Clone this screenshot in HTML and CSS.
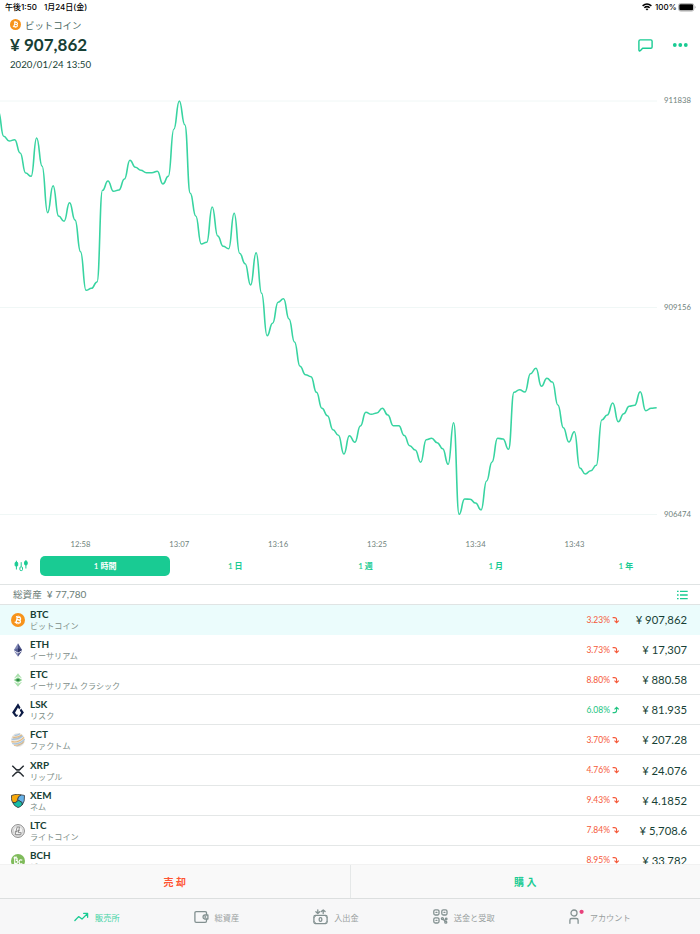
FILE: index.html
```html
<!DOCTYPE html>
<html lang="ja">
<head>
    <meta charset="UTF-8">
    <meta name="viewport" content="width=device-width, initial-scale=1.0">
    <title>販売所</title>
    <link rel="stylesheet" href="styles.css">
</head>
<body>
    <svg class="defs">
        <symbol id="down" viewBox="0 0 8 8">
            <path d="M.6 1.6h1.8q2.2 0 2.2 2v2.8M2.5 4.7l2.1 2.1 2.2-2.1" />
        </symbol>
        <symbol id="up" viewBox="0 0 8 8">
            <path d="M.6 6.6h1.8q2.2 0 2.2-2v-2.8M2.5 3.4l2.1-2.1 2.2 2.1" />
        </symbol>
        <symbol id="btc" viewBox="0 0 14 14">
            <circle cx="7" cy="7" r="7" fill="#f7931a" />
            <g transform="rotate(13 7 7)" fill="none" stroke="#fff" stroke-width="1.3">
                <path d="M4.2 4.1h3.5q1.6 0 1.6 1.35T7.7 6.8H5.6h2.4q1.8 0 1.8 1.5T8 9.8H4.2M5.7 4v5.8" />
                <path d="M6.2 2.7v1.4M7.9 2.7v1.4M6.2 9.8v1.5M7.9 9.8v1.5" stroke-width=".8" />
            </g>
        </symbol>
    </svg>

    <div class="status">
        <span class="clock">午後1:50</span>
        <span class="date">1月24日(金)</span>
        <svg class="wifi" width="10" height="8" viewBox="0 0 10 8" fill="none" stroke="#000" stroke-width="1.5">
            <path d="M.6 2.9q4.4-3.9 8.8 0M2.3 4.8q2.7-2.3 5.4 0" />
            <path d="M3.5 5.9L5 7.5l1.5-1.6Q5 4.9 3.5 5.9z" fill="#000" stroke="none" />
        </svg>
        <span class="charge">100%</span>
        <svg width="18" height="9" viewBox="0 0 18 9">
            <rect x=".5" y=".5" width="15.4" height="7.6" rx="2.2" fill="#fff" stroke="#aaa" stroke-width=".8" />
            <rect x="1.3" y="1.3" width="13.8" height="6" rx="1.2" />
            <path d="M16.8 3v2.6q.9-.4.9-1.3t-.9-1.3z" fill="#aaa" />
        </svg>
    </div>

    <header class="header">
        <div>
            <div class="coin-title"><svg width="11" height="11"><use href="#btc" /></svg><span>ビットコイン</span></div>
            <div class="big-price">¥ 907,862</div>
            <div class="time">2020/01/24 13:50</div>
        </div>
        <div class="actions">
            <svg width="15" height="13" viewBox="0 0 15 13" fill="none" stroke="#19cb93" stroke-width="1.4" stroke-linejoin="round">
                <path d="M2.2.9h10.6q1.3 0 1.3 1.3v5.7q0 1.3-1.3 1.3H4.6L2.3 11.7q-1.4.8-1.4-.9V2.2Q.9.9 2.2.9z" />
            </svg>
            <svg width="16" height="4" viewBox="0 0 16 4" fill="#19cb93">
                <circle cx="2.8" cy="2" r="1.9" /><circle cx="8.3" cy="2" r="1.9" /><circle cx="13.8" cy="2" r="1.9" />
            </svg>
        </div>
    </header>

    <svg class="chart" width="700" height="476" viewBox="0 76 700 476">
        <path class="grid-line" d="M0 101H657M0 307.5H657M0 514.5H657" />
        <path id="line" class="line" />
        <g class="axis">
            <text x="664" y="103.4" textLength="27">911838</text>
            <text x="664" y="310.1" textLength="27">909156</text>
            <text x="664" y="517" textLength="27">906474</text>
            <text x="70.5" y="546.7" textLength="20">12:58</text>
            <text x="169.3" y="546.7" textLength="20">13:07</text>
            <text x="268.1" y="546.7" textLength="20">13:16</text>
            <text x="366.9" y="546.7" textLength="20">13:25</text>
            <text x="465.6" y="546.7" textLength="20">13:34</text>
            <text x="564.4" y="546.7" textLength="20">13:43</text>
        </g>
    </svg>

    <div class="range">
        <svg width="16" height="12" viewBox="0 0 16 12" fill="#19cb93" stroke="#19cb93">
            <path d="M3.4.7v8.8M8.2 2.2v4.5M12.9.2v8.3" stroke-width="1" />
            <rect x="2.1" y="2.3" width="2.6" height="3.8" rx=".8" />
            <rect x="11.6" y="1.3" width="2.6" height="3.6" rx=".8" />
            <rect x="6.9" y="6.8" width="2.6" height="3.8" rx="1.1" fill="#fff" />
        </svg>
        <div class="range-tabs">
            <span class="active">1 時間</span>
            <span>1 日</span>
            <span>1 週</span>
            <span>1 月</span>
            <span>1 年</span>
        </div>
    </div>

    <div class="assets">
        <span>総資産</span><span class="total">¥ 77,780</span>
        <svg width="11" height="10" viewBox="0 0 11 10" fill="none" stroke="#19cb93" stroke-width="1.3">
            <path d="M0 1.3h1.6M3 1.3h7.7M0 5h1.6M3 5h7.7M0 8.7h1.6M3 8.7h7.7" />
        </svg>
    </div>

    <div class="coins">
        <div class="coin selected">
            <svg class="logo"><use href="#btc" /></svg>
            <div class="row">
                <div class="name"><b>BTC</b><small>ビットコイン</small></div>
                <span class="change">3.23%<svg><use href="#down" /></svg></span>
                <span class="price">¥ 907,862</span>
            </div>
        </div>
        <div class="coin">
            <svg class="logo" viewBox="0 0 14 14">
                <path d="M7 .3L2.9 7.1 7 9.5z" fill="#7f86b4" /><path d="M7 .3l4.1 6.8L7 9.5z" fill="#4b5287" />
                <path d="M2.9 7.1L7 5.3v4.2z" fill="#5a6295" /><path d="M11.1 7.1L7 5.3v4.2z" fill="#2f3566" />
                <path d="M2.9 8L7 10.4v3.4z" fill="#8389b5" /><path d="M11.1 8L7 10.4v3.4z" fill="#4b5287" />
            </svg>
            <div class="row">
                <div class="name"><b>ETH</b><small>イーサリアム</small></div>
                <span class="change">3.73%<svg><use href="#down" /></svg></span>
                <span class="price">¥ 17,307</span>
            </div>
        </div>
        <div class="coin">
            <svg class="logo" viewBox="0 0 14 14">
                <path d="M7 .3L2.9 5.4 7 3.6l4.1 1.8z" fill="#a9dfab" /><path d="M7 13.8L2.9 8.7 7 10.5l4.1-1.8z" fill="#a9dfab" />
                <path d="M2.7 7L7 4.3 11.3 7 7 9.7z" fill="#8bd38e" /><path d="M4.5 7L7 5.6 9.5 7 7 8.5z" fill="#2e8b46" />
            </svg>
            <div class="row">
                <div class="name"><b>ETC</b><small>イーサリアム クラシック</small></div>
                <span class="change">8.80%<svg><use href="#down" /></svg></span>
                <span class="price">¥ 880.58</span>
            </div>
        </div>
        <div class="coin">
            <svg class="logo" viewBox="0 0 14 14" fill="#0c1b45">
                <path d="M7 .2l2.5 4.2-1.3 2.2L7 4.6 4 9.7l1.5 2h1.8l-1.5 2.1H4.3L1.1 9.6z" />
                <path d="M10.1 5.4l2.8 4.2-3.2 4.2H7.5l2.6-4.1-1.3-2.1z" />
            </svg>
            <div class="row">
                <div class="name"><b>LSK</b><small>リスク</small></div>
                <span class="change up">6.08%<svg><use href="#up" /></svg></span>
                <span class="price">¥ 81.935</span>
            </div>
        </div>
        <div class="coin">
            <svg class="logo" viewBox="0 0 14 14" fill="none">
                <circle cx="7" cy="7" r="6.9" fill="#e9e8e5" />
                <path d="M1.5 4q4 1.2 9.5-2M.5 8.6q7 1.7 12.5-4.2M3 12.2q6 .5 10-3.9" stroke="#e7b878" stroke-width="1.1" />
                <path d="M3.5 2.2q2.5.6 5.5-1.4M.6 6.2q6 1 11.2-3.2M1.3 10.5q7 1.4 12.3-4.3" stroke="#a9c4dc" stroke-width="1.2" />
                <path d="M2 5.2q5 .7 8.8-2.3M5.5 13.2q4-.7 7-3.5" stroke="#b4b1ac" stroke-width=".7" />
            </svg>
            <div class="row">
                <div class="name"><b>FCT</b><small>ファクトム</small></div>
                <span class="change">3.70%<svg><use href="#down" /></svg></span>
                <span class="price">¥ 207.28</span>
            </div>
        </div>
        <div class="coin">
            <svg class="logo" viewBox="0 0 14 14" fill="none" stroke="#23292f" stroke-width="1.4">
                <path d="M1.3 1.8l3.4 3.3q2.3 2 4.6 0l3.4-3.3M1.3 12.4l3.4-3.3q2.3-2 4.6 0l3.4 3.3" />
            </svg>
            <div class="row">
                <div class="name"><b>XRP</b><small>リップル</small></div>
                <span class="change">4.76%<svg><use href="#down" /></svg></span>
                <span class="price">¥ 24.076</span>
            </div>
        </div>
        <div class="coin">
            <svg class="logo" viewBox="0 0 14 14" stroke="#303338" stroke-width=".8" stroke-linejoin="round">
                <path d="M.5 1.5Q7-.8 10.2 1 6.8 2.2 6.7 5.5q-.2 3-3.2 3.2Q-.1 9.1.5 1.5z" fill="#f7a80c" />
                <path d="M10.2 1q1.8 0 3.3.5.5 6-2.3 9.5Q12 8 8.8 7 6.6 6.3 6.7 5.3 6.9 2.2 10.2 1z" fill="#67b2e8" />
                <path d="M1.6 8.3q3 1.4 4.7-1Q7 6 8.6 7q3.4 1 2.6 4Q9.2 13 7 13.6 2.8 12 1.6 8.3z" fill="#17bfa5" />
            </svg>
            <div class="row">
                <div class="name"><b>XEM</b><small>ネム</small></div>
                <span class="change">9.43%<svg><use href="#down" /></svg></span>
                <span class="price">¥ 4.1852</span>
            </div>
        </div>
        <div class="coin">
            <svg class="logo" viewBox="0 0 14 14" fill="none" stroke="#777">
                <circle cx="7" cy="7" r="6.4" fill="#f3f3f3" stroke-width=".9" />
                <circle cx="7" cy="7" r="4.8" stroke="#aaa" stroke-width=".5" />
                <path d="M6.1 3.1h2.4L7.3 8.6h2.9l-.5 2H4.2l1.9-7.5zM3.7 8.1l5.1-2" stroke-width=".8" />
            </svg>
            <div class="row">
                <div class="name"><b>LTC</b><small>ライトコイン</small></div>
                <span class="change">7.84%<svg><use href="#down" /></svg></span>
                <span class="price">¥ 5,708.6</span>
            </div>
        </div>
        <div class="coin">
            <svg class="logo" viewBox="0 0 14 14" fill="none" stroke="#fff" stroke-width="1.1">
                <circle cx="7" cy="7" r="7" fill="#7fbb5b" stroke="none" />
                <path d="M2.6 3.9h2.2q1.5 0 1.5 1.2T4.9 6.4h.3q1.7 0 1.7 1.5T5.2 9.4H3.1M3.7 3.9v5.5M3.8 2.6v1.3M5.2 2.6v1.3M11.3 6.3q-3-1.4-3.2 1.6.2 3 3.2 1.7" />
            </svg>
            <div class="row">
                <div class="name"><b>BCH</b><small>ビットコインキャッシュ</small></div>
                <span class="change">8.95%<svg><use href="#down" /></svg></span>
                <span class="price">¥ 33,782</span>
            </div>
        </div>
    </div>

    <div class="trade">
        <div class="sell">売 却</div>
        <div class="buy">購 入</div>
    </div>

    <nav class="tabs">
        <div class="tab current">
            <svg width="15" height="14" viewBox="0 0 15 14">
                <path d="M.9 10.5l3.7-3.9 3.4 2.5 5.3-5.3M9.7 3.4h3.9v3.9" />
            </svg>
            <span>販売所</span>
        </div>
        <div class="tab">
            <svg width="15" height="14" viewBox="0 0 15 14">
                <path d="M12.5 4.6V3q0-1.3-1.3-1.3H2.2Q.9 1.7.9 3v8q0 1.3 1.3 1.3h9q1.3 0 1.3-1.3V9.4" />
                <path d="M13.9 5v4h-3.2q-1.7-.3-1.7-2t1.7-2z" /><circle cx="11.3" cy="7" r=".4" />
            </svg>
            <span>総資産</span>
        </div>
        <div class="tab">
            <svg width="15" height="16" viewBox="0 0 15 16">
                <path d="M4.8.8v3.5M2.9 2.8l1.9 1.7 1.9-1.7M10.2 4.6V1M8.3 2.6L10.2.9l1.9 1.7" />
                <rect x=".9" y="6.4" width="13.2" height="8.2" rx="1.5" />
                <rect x="6.2" y="8.7" width="2.6" height="3.6" rx="1.2" />
                <path d="M1 8.7l2-2M12.2 6.7l1.9 2M1 12.3l2 2M12.2 14.3l1.9-2" stroke-width=".9" />
            </svg>
            <span>入出金</span>
        </div>
        <div class="tab">
            <svg width="15" height="15" viewBox="0 0 15 15">
                <rect x=".8" y=".8" width="5.2" height="5.2" rx="1.5" /><rect x="8.8" y=".8" width="5.2" height="5.2" rx="1.5" />
                <rect x=".8" y="8.8" width="5.2" height="5.2" rx="1.5" />
                <path d="M3 3.4h.9M11 3.4h.9M3 11.4h.9" />
                <circle cx="9.4" cy="9.6" r="1" /><circle cx="13.2" cy="10" r=".8" /><circle cx="12.8" cy="13.2" r="1" />
                <path d="M10.2 10.4l1.8 2M12.5 10.6l-1 .9" />
            </svg>
            <span>送金と受取</span>
        </div>
        <div class="tab">
            <svg width="15" height="15" viewBox="0 0 15 15">
                <circle cx="5" cy="4" r="3" />
                <path d="M.9 14.3v-3.1q0-1.7 1.7-1.7h4.8q1.7 0 1.7 1.7v3.1" />
                <circle cx="12.6" cy="2.8" r="2.1" fill="#e8417c" stroke="none" />
            </svg>
            <span>アカウント</span>
        </div>
    </nav>

    <script>
        // one sample every 30 seconds
        const points = [
            111, 136.3, 141, 139.7, 153, 173, 176.3, 138, 166.3, 212.7,
            185.7, 216, 221.3, 202.7, 220, 251.7, 290.3, 288.3, 282, 190.3,
            181, 191.3, 190, 179, 160.3, 167.3, 170.3, 172.7, 172.7, 171.3,
            184, 176.3, 129.3, 101, 124.7, 193.3, 216, 244, 242.3, 207,
            236, 246.3, 248.7, 213.3, 253.3, 263.7, 285, 252.7, 293.3, 335.7,
            323.3, 302.3, 298.7, 319, 342, 366.3, 374.7, 376.7, 392.3, 408.3,
            415.7, 429.7, 435.3, 454, 435.7, 442.3, 426, 412.3, 414.3, 413,
            408.3, 415, 425.7, 425.7, 435.5, 445.7, 450, 462.3, 439.7, 438.3,
            442.7, 448.7, 464.3, 422.7, 514.3, 499, 499.3, 503, 510, 481,
            462, 438.3, 439, 449.3, 392.3, 389.7, 392, 373.7, 368.3, 386.3,
            378.3, 382, 405, 427.7, 442, 431.7, 468, 474, 470.7, 465.3,
            420, 415, 403, 421.7, 413.7, 406.3, 405.3, 391.7, 410.7, 408.3,
            407.7
        ];
        const step = 5.487;
        let x = -1.77;
        let d = `M${x} ${points[0]}`;
        for (let i = 1; i < points.length; i++) {
            const mid = x + step / 2;
            x += step;
            d += `C${mid} ${points[i - 1]} ${mid} ${points[i]} ${x} ${points[i]}`;
        }
        document.getElementById('line').setAttribute('d', d);
    </script>
</body>
</html>
```
FILE: styles.css
```css
* {
    box-sizing: border-box;
}
body {
    margin: 0;
    width: 700px;
    height: 934px;
    overflow: hidden;
    display: flex;
    flex-direction: column;
    font-family: Lato, "Noto Sans CJK JP", sans-serif;
    color: #173f35;
    background-color: #fff;
}
svg {
    display: block;
    flex: none;
}
.defs {
    display: none;
}
.status {
    display: flex;
    align-items: center;
    height: 14px;
    padding: 0 4px 0 5px;
    font-family: Inter, "Noto Sans CJK JP", sans-serif;
    font-size: 8px;
    font-weight: 500;
    line-height: 14px;
    color: #000;
    white-space: nowrap;
}
.clock {
    width: 39px;
}
.wifi {
    margin-left: auto;
    margin-right: 3px;
}
.charge {
    width: 23px;
}
.header {
    display: flex;
    justify-content: space-between;
    height: 62px;
    padding: 5px 12px 0 10px;
}
.coin-title {
    display: flex;
    align-items: center;
    gap: 4px;
    height: 11px;
    font-size: 9.4px;
    color: #45655d;
}
.big-price {
    margin-top: 4px;
    font-size: 17px;
    font-weight: 700;
    line-height: 21px;
}
.time {
    margin-top: 2px;
    font-size: 9.7px;
    line-height: 14px;
}
.actions {
    display: flex;
    align-items: center;
    gap: 19px;
    height: 52px;
}
.chart {
    height: 476px;
}
.grid-line {
    stroke: #f0f7f6;
    stroke-width: 1;
}
.line {
    fill: none;
    stroke: #38d4a1;
    stroke-width: 1.6;
    stroke-linejoin: round;
}
.axis {
    font-size: 7.7px;
    fill: #6f827c;
}
.range {
    display: flex;
    align-items: center;
    height: 33px;
    padding: 0 9px 4px 13px;
    border-bottom: 1px solid #e0e4e4;
}
.range svg {
    margin-right: 11px;
}
.range-tabs {
    flex: 1;
    display: grid;
    grid-template-columns: repeat(5, 1fr);
    font-size: 8px;
    font-weight: 600;
    line-height: 20px;
    text-align: center;
    color: #19cb93;
}
.range-tabs .active {
    color: #fff;
    background-color: #19cb93;
    border-radius: 5px;
}
.assets {
    display: flex;
    align-items: center;
    height: 20px;
    padding: 0 12px 0 13px;
    font-size: 9.6px;
    line-height: 19px;
    color: #6b7d77;
    border-bottom: 1px solid #e0e4e4;
}
.total {
    margin-left: 5px;
    font-size: 10px;
}
.assets svg {
    margin-left: auto;
}
.coins {
    height: 259px;
    overflow: hidden;
}
.coin {
    display: flex;
    align-items: center;
    height: 30.1px;
    padding-left: 11px;
}
.selected {
    background-color: #ebfcfc;
}
.logo {
    width: 14px;
    height: 14px;
    margin-right: 5px;
}
.row {
    flex: 1;
    display: flex;
    align-items: center;
    height: 30px;
    padding-right: 13px;
    border-bottom: 1px solid #e4e7e7;
}
.selected .row {
    border-color: transparent;
}
.name {
    flex: 1;
    padding-top: 2px;
}
.name b {
    display: block;
    font-size: 9.9px;
    line-height: 11px;
}
.name small {
    display: block;
    font-size: 8.1px;
    line-height: 12px;
    color: #7d8e88;
}
.change {
    display: flex;
    align-items: center;
    font-size: 8.5px;
    color: #f5593a;
}
.change svg {
    width: 8px;
    height: 8px;
    margin-left: 2px;
    fill: none;
    stroke: currentColor;
    stroke-width: 1.1;
}
.up {
    color: #22c482;
}
.price {
    width: 67px;
    font-size: 11.3px;
    text-align: right;
}
.trade {
    display: flex;
    height: 35px;
    background-color: #f9f9f9;
    border-top: 1px solid #f2f2f2;
    border-bottom: 1px solid #dcdfdf;
    font-size: 10px;
    font-weight: 700;
    line-height: 34px;
    text-align: center;
}
.trade div {
    flex: 1;
}
.sell {
    color: #ff5533;
    border-right: 1px solid #e5e8e8;
}
.buy {
    color: #19cb93;
}
.tabs {
    display: flex;
    align-items: center;
    gap: 74px;
    height: 35px;
    padding-left: 74px;
    background-color: #f7f7f8;
    font-size: 8.2px;
    color: #999f9f;
    white-space: nowrap;
}
.tab {
    display: flex;
    align-items: center;
    gap: 6px;
}
.tab svg {
    fill: none;
    stroke: #839191;
    stroke-width: 1.3;
    stroke-linecap: round;
    stroke-linejoin: round;
}
.tab.current {
    color: #3fd3a4;
}
.current svg {
    stroke: #19cb93;
}
```
